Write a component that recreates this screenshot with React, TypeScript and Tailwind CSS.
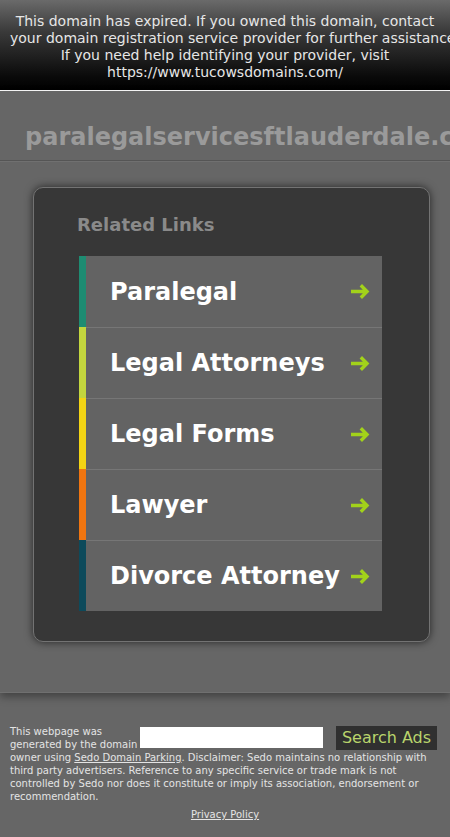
import React from "react";

const links = [
  { label: "Paralegal", color: "bg-[#1e8c72]" },
  { label: "Legal Attorneys", color: "bg-[#c3d63e]" },
  { label: "Legal Forms", color: "bg-[#f3d414]" },
  { label: "Lawyer", color: "bg-[#f07510]" },
  { label: "Divorce Attorney", color: "bg-[#0d4a5b]" },
];

function Arrow() {
  return (
    <svg width="21" height="17" viewBox="0 0 21 17" className="shrink-0">
      <path
        d="M1 8.5 H17 M10.8 2.3 L17 8.5 L10.8 14.7"
        fill="none"
        stroke="#a2d21a"
        strokeWidth="3.4"
        strokeLinejoin="miter"
      />
    </svg>
  );
}

export default function App() {
  return (
    <div className="min-h-[837px] bg-[#666666] font-['DejaVu_Sans',sans-serif]">
      {/* expiry notice */}
      <div className="bg-[linear-gradient(to_bottom,#6a6a6a_0%,#3a3a3a_35%,#0a0a0a_85%,#000000_100%)] border-b border-white px-[10px] pt-[13px] pb-[9px] text-center text-[14px] leading-[17px] text-[#e6e6e6] whitespace-nowrap overflow-hidden">
        <p>This domain has expired. If you owned this domain, contact</p>
        <p>your domain registration service provider for further assistance.</p>
        <p>If you need help identifying your provider, visit</p>
        <p>https://www.tucowsdomains.com/</p>
      </div>

      <main className="relative z-10 bg-[#666666] shadow-[0_4px_8px_rgba(0,0,0,0.35)] border-b border-[#707070] pb-[50px]">
        <header className="border-b border-[#555555] shadow-[0_1px_0_#707070] pt-[32px] pb-[9px] px-[25px] overflow-hidden whitespace-nowrap">
          <h1 className="text-[24px] leading-[28px] font-bold text-[#9a9a9a]">
            paralegalservicesftlauderdale.com
          </h1>
        </header>

        <section className="ml-[33px] mt-[26px] w-[397px] rounded-[10px] border border-[#737373] bg-[#373737] shadow-[0_0_9px_rgba(0,0,0,0.65)] pt-[26px] pb-[30px]">
          <h2 className="pl-[43px] text-[18px] leading-[21px] font-bold text-[#8a8a8a]">
            Related Links
          </h2>
          <ul className="ml-[45px] mt-[21px] w-[303px]">
            {links.map((l, i) => (
              <li key={l.label} className="flex h-[71px]">
                <span className={`w-[7px] ${l.color}`} />
                <a
                  href="#"
                  className={`flex flex-1 items-center justify-between bg-[#636363] pl-[24px] pr-[11px] ${
                    i > 0 ? "border-t border-[#767676]" : ""
                  }`}
                >
                  <span className="text-[24px] leading-[28px] font-bold text-white whitespace-nowrap">
                    {l.label}
                  </span>
                  <Arrow />
                </a>
              </li>
            ))}
          </ul>
        </section>
      </main>

      <footer className="bg-[#666666] px-[10px] pt-[32px] pb-[16px] text-[10px] leading-[13px] text-[#e4e4e4]">
        <form className="float-right flex items-start gap-[13px] mr-[3px] mt-[1px]">
          <input
            type="text"
            aria-label="Search"
            className="mt-[1px] h-[21px] w-[183px] bg-white outline-none"
          />
          <button
            type="button"
            className="h-[24px] w-[101px] bg-[#303030] text-[16px] leading-[24px] text-[#b9d46c]"
          >
            Search Ads
          </button>
        </form>
        <p>
          This webpage was generated by the domain owner using{" "}
          <a href="#" className="underline">
            Sedo Domain Parking
          </a>
          . Disclaimer: Sedo maintains no relationship with third party
          advertisers. Reference to any specific service or trade mark is not
          controlled by Sedo nor does it constitute or imply its association,
          endorsement or recommendation.
        </p>
        <p className="clear-both mt-[5px] text-center">
          <a href="#" className="underline">
            Privacy Policy
          </a>
        </p>
      </footer>
    </div>
  );
}
